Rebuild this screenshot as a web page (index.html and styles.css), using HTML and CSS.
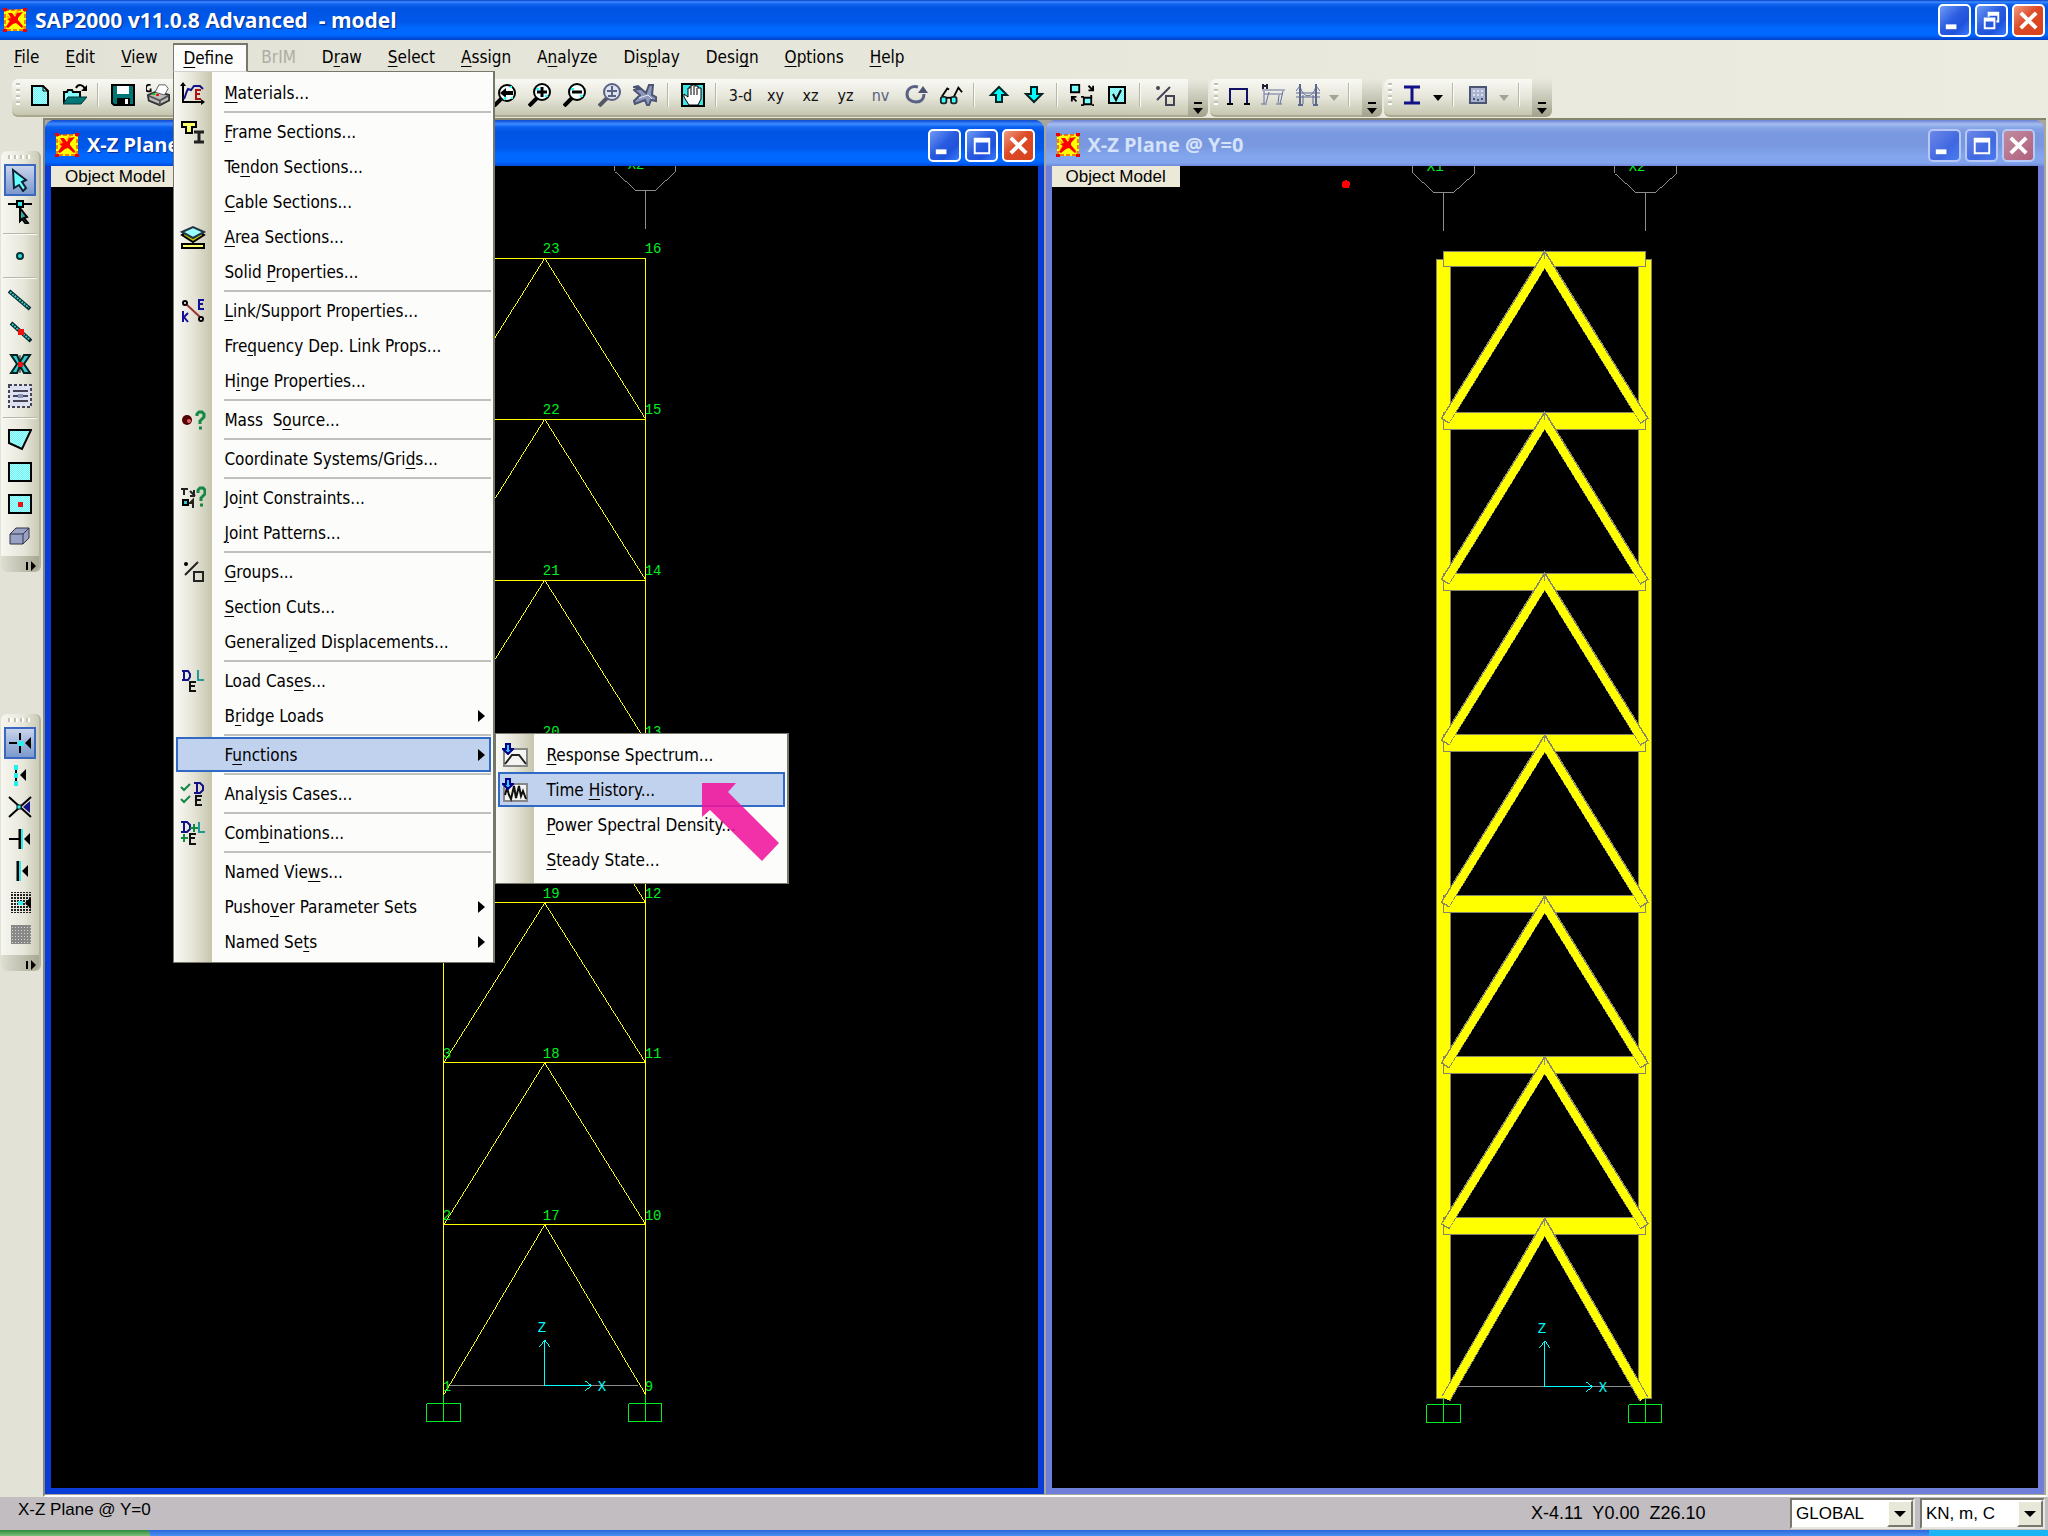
FILE: index.html
```html
<!DOCTYPE html>
<html lang="en">
<head>
  <meta charset="UTF-8">
  <title>SAP2000 v11.0.8 Advanced - model</title>
  <link rel="stylesheet" href="styles.css">
</head>
<body>
<svg class="defs" width="0" height="0" aria-hidden="true">
  <defs>
    <pattern id="dither" width="2" height="2" patternUnits="userSpaceOnUse">
      <rect width="2" height="2" fill="#5ff"/>
      <rect width="1" height="1" fill="#c4f4f4"/>
      <rect x="1" y="1" width="1" height="1" fill="#c4f4f4"/>
    </pattern>
    <pattern id="dots" width="3" height="3" patternUnits="userSpaceOnUse">
      <rect width="2" height="2" fill="#222"/>
    </pattern>
    <pattern id="mesh" width="3" height="3" patternUnits="userSpaceOnUse">
      <rect width="3" height="3" fill="#888"/>
      <rect x="1" y="1" width="1" height="1" fill="#d8d8d0"/>
    </pattern>
    <symbol id="logo" viewBox="0 0 24 24">
      <path d="M1 2l22-1v22H1z" fill="#ff0"/>
      <path d="M2 2h20v20H2z" fill="none" stroke="#e00" stroke-width="1" stroke-dasharray="4 2"/>
      <path d="M0 0h4v3H0zM20 0h4v3h-4zM0 21h4v3H0zM20 21h4v3h-4z" fill="#e00"/>
      <path d="M4 8l4 3-4 8M17 17l4 3M15 3l-3 4" fill="none" stroke="#fa0" stroke-width="2"/>
      <path d="M5 5h4l3 4 2-4 6-1-5 6v2l5 6-1 2-6-5-3 1-5 4-2-1 4-6-3-2 4-1z" fill="#f00"/>
    </symbol>
    <symbol id="min" viewBox="0 0 30 30"><path d="M6 19h11v5H6z" fill="#fff"/></symbol>
    <symbol id="max" viewBox="0 0 30 30"><path d="M7 7h17v17H7zM9 12v10h13V12z" fill="#fff" fill-rule="evenodd"/></symbol>
    <symbol id="restore" viewBox="0 0 30 30"><path d="M11 6h12v11h-3v-2h1v-5h-8v1h-2zM7 12h12v12H7zM9 16v6h8v-6z" fill="#fff" fill-rule="evenodd"/></symbol>
    <symbol id="close" viewBox="0 0 30 30"><path d="M7 7l16 16M23 7L7 23" stroke="#fff" stroke-width="4"/></symbol>
    <symbol id="down-blue" viewBox="0 0 12 12"><path d="M4 1h4v5h3l-5 5-5-5h3z" fill="#3cf" stroke="#008" stroke-width="2"/></symbol>
  </defs>
</svg>

<div class="app">
  <header class="titlebar">
    <svg class="logo"><use href="#logo"/></svg>
    <h1 class="title title-app">SAP2000 v11.0.8 Advanced&nbsp; - model</h1>
    <button class="caption" aria-label="Minimize"><svg><use href="#min"/></svg></button>
    <button class="caption" aria-label="Restore"><svg><use href="#restore"/></svg></button>
    <button class="caption caption-close" aria-label="Close"><svg><use href="#close"/></svg></button>
  </header>

  <nav class="menubar">
    <button class="menu-title"><u>F</u>ile</button>
    <button class="menu-title"><u>E</u>dit</button>
    <button class="menu-title"><u>V</u>iew</button>
    <div class="menu-open">
      <button class="menu-title active"><u>D</u>efine</button>
      <div class="menu">
        <button class="item">
          <svg class="item-icon" viewBox="0 0 26 24"><path d="M3 3v18h21" fill="none" stroke="#000" stroke-width="2"/><path d="M0 5l3-4 3 4zM21 18l4 3-4 3z"/><path d="M4 18c2-4 2-7 4-10l3 1 3-4h6l3 3" fill="none" stroke="#118" stroke-width="2"/><path d="M21 9h-5v9h5M16 13h4" fill="none" stroke="#a11" stroke-width="2"/></svg>
          <span><u>M</u>aterials...</span></button>
        <hr>
        <button class="item">
          <svg class="item-icon" viewBox="0 0 26 24"><path d="M2 2h14v5h-4v6H6V7H2z" fill="#ff6" stroke="#000" stroke-width="2"/><path d="M14 12h10M14 22h10M19 12v10" stroke="#222" stroke-width="3"/></svg>
          <span><u>F</u>rame Sections...</span></button>
        <button class="item"><span class="item-icon"></span><span>Te<u>n</u>don Sections...</span></button>
        <button class="item"><span class="item-icon"></span><span><u>C</u>able Sections...</span></button>
        <button class="item">
          <svg class="item-icon" viewBox="0 0 26 24"><path d="M2 10l11 7 11-7-4-3H6z" fill="#cc0" stroke="#000" stroke-width="2"/><path d="M2 7l11-5 11 5-11 6z" fill="#9ff" stroke="#234" stroke-width="2"/><path d="M2 19h22v4H2z" fill="#ff6" stroke="#000" stroke-width="2"/></svg>
          <span><u>A</u>rea Sections...</span></button>
        <button class="item"><span class="item-icon"></span><span>Solid <u>P</u>roperties...</span></button>
        <hr>
        <button class="item">
          <svg class="item-icon" viewBox="0 0 26 24"><path d="M6 5l14 13" stroke="#933" stroke-width="2"/><circle cx="5" cy="4" r="2" fill="#fff" stroke="#000" stroke-width="2"/><circle cx="21" cy="20" r="2" fill="#fff" stroke="#000" stroke-width="2"/><path d="M24 1h-5v9h5M19 5h4M3 12v11M8 14l-4 4 4 5" fill="none" stroke="#119" stroke-width="2"/></svg>
          <span><u>L</u>ink/Support Properties...</span></button>
        <button class="item"><span class="item-icon"></span><span>Fre<u>q</u>uency Dep. Link Props...</span></button>
        <button class="item"><span class="item-icon"></span><span>H<u>i</u>nge Properties...</span></button>
        <hr>
        <button class="item">
          <svg class="item-icon" viewBox="0 0 26 24"><circle cx="7" cy="12" r="5" fill="#500"/><circle cx="9" cy="13" r="2" fill="#d66"/><path d="M17 8V6l2-2h3l2 2v3l-4 4v3M19 20h3" fill="none" stroke="#184" stroke-width="3"/></svg>
          <span>Mass&nbsp; S<u>o</u>urce...</span></button>
        <hr>
        <button class="item"><span class="item-icon"></span><span>Coordinate Systems/Gri<u>d</u>s...</span></button>
        <hr>
        <button class="item">
          <svg class="item-icon" viewBox="0 0 26 24"><path d="M1 3h7M4 3v6M10 5l5 5M14 4v6M10 10h5M14 17h-4l3-3v8" fill="none" stroke="#222" stroke-width="2"/><rect x="3" y="14" width="5" height="5" fill="#3cc" stroke="#000" stroke-width="2"/><path d="M18 7V4l2-2h3l2 2v4l-4 4v3M20 19h3" fill="none" stroke="#184" stroke-width="3"/></svg>
          <span>Jo<u>i</u>nt Constraints...</span></button>
        <button class="item"><span class="item-icon"></span><span><u>J</u>oint Patterns...</span></button>
        <hr>
        <button class="item">
          <svg class="item-icon" viewBox="0 0 26 24"><circle cx="6" cy="4" r="2"/><path d="M18 2L5 15M14 12h9v9h-9z" fill="none" stroke="#222" stroke-width="2"/></svg>
          <span><u>G</u>roups...</span></button>
        <button class="item"><span class="item-icon"></span><span><u>S</u>ection Cuts...</span></button>
        <button class="item"><span class="item-icon"></span><span>Generali<u>z</u>ed Displacements...</span></button>
        <hr>
        <button class="item">
          <svg class="item-icon" viewBox="0 0 26 24"><path d="M2 2h6l2 3v3l-2 3H2M4 2v9" fill="none" stroke="#118" stroke-width="2"/><path d="M18 1v10h6" fill="none" stroke="#299" stroke-width="2"/><path d="M16 13h-6v9h6M10 17h5" fill="none" stroke="#111" stroke-width="2"/></svg>
          <span>Load Cas<u>e</u>s...</span></button>
        <button class="item has-sub"><span class="item-icon"></span><span>B<u>r</u>idge Loads</span></button>
        <hr>
        <button class="item has-sub selected"><span class="item-icon"></span><span>F<u>u</u>nctions</span></button>
        <hr>
        <button class="item">
          <svg class="item-icon" viewBox="0 0 26 24"><path d="M1 5l3 3 6-6M1 17l3 3 6-6" fill="none" stroke="#184" stroke-width="2"/><path d="M14 1h6l3 3v4l-3 3h-6M17 1v10" fill="none" stroke="#118" stroke-width="2"/><path d="M22 14h-6v9h6M16 18h5" fill="none" stroke="#111" stroke-width="2"/></svg>
          <span>Anal<u>y</u>sis Cases...</span></button>
        <hr>
        <button class="item">
          <svg class="item-icon" viewBox="0 0 26 24"><path d="M1 1h6l3 3v4l-3 3H1M4 1v10" fill="none" stroke="#118" stroke-width="2"/><path d="M10 7h8M14 3v8M1 17h7M4 13v8" stroke="#184" stroke-width="2"/><path d="M19 1v10h6" fill="none" stroke="#299" stroke-width="2"/><path d="M16 13h-6v10h6M10 17h5" fill="none" stroke="#111" stroke-width="2"/></svg>
          <span>Com<u>b</u>inations...</span></button>
        <hr>
        <button class="item"><span class="item-icon"></span><span>Named Vie<u>w</u>s...</span></button>
        <button class="item has-sub"><span class="item-icon"></span><span>Pusho<u>v</u>er Parameter Sets</span></button>
        <button class="item has-sub"><span class="item-icon"></span><span>Named Se<u>t</u>s</span></button>

        <div class="menu submenu">
          <button class="item">
            <svg class="item-icon" viewBox="0 0 26 24"><rect x="2" y="6" width="23" height="17" fill="#f4f4f0" stroke="#888" stroke-width="2"/><path d="M3 21l7-9h7l7 9" fill="none" stroke="#222" stroke-width="2"/><use href="#down-blue" width="12" height="12"/></svg>
            <span><u>R</u>esponse Spectrum...</span></button>
          <button class="item selected">
            <svg class="item-icon" viewBox="0 0 26 24"><rect x="2" y="6" width="23" height="17" fill="#f4f4f0" stroke="#888" stroke-width="2"/><path d="M3 17l2-7 2 7 2 4 3-13 2 12 3-12 2 10 2-5 3 8" fill="none" stroke="#111" stroke-width="2"/><use href="#down-blue" width="12" height="12"/></svg>
            <span>Time <u>H</u>istory...</span></button>
          <button class="item"><span class="item-icon"></span><span><u>P</u>ower Spectral Density...</span></button>
          <button class="item"><span class="item-icon"></span><span><u>S</u>teady State...</span></button>
          <svg class="pointer" viewBox="0 0 78 78"><path d="M0 0h34l-8 9 51 51-17 18L8 27l-8 7z" fill="#f0149c" fill-opacity=".88"/></svg>
        </div>
      </div>
    </div>
    <button class="menu-title" disabled>BrIM</button>
    <button class="menu-title">D<u>r</u>aw</button>
    <button class="menu-title"><u>S</u>elect</button>
    <button class="menu-title"><u>A</u>ssign</button>
    <button class="menu-title">A<u>n</u>alyze</button>
    <button class="menu-title">Dis<u>p</u>lay</button>
    <button class="menu-title">Desi<u>g</u>n</button>
    <button class="menu-title"><u>O</u>ptions</button>
    <button class="menu-title"><u>H</u>elp</button>
  </nav>

  <div class="toolbars">
    <div class="toolbar">
      <span class="grip"></span>
      <button class="tool" aria-label="New"><svg viewBox="0 0 24 24"><path d="M4 3h11l5 5v14H4z" fill="url(#dither)" stroke="#000" stroke-width="2"/><path d="M15 3v5h5" fill="none" stroke="#000"/></svg></button>
      <button class="tool" aria-label="Open"><svg viewBox="0 0 24 24"><path d="M1 20V9h3l1-2h4l1 2h7v5" fill="#8ff" stroke="#000" stroke-width="2"/><path d="M0 21l5-7h19l-6 7z" fill="#077" stroke="#033" stroke-width="1"/><path d="M13 5c2-4 7-4 9 1" fill="none" stroke="#000" stroke-width="2"/><path d="M24 2v6h-6z"/></svg></button>
      <span class="tool-sep"></span>
      <button class="tool" aria-label="Save"><svg viewBox="0 0 24 24"><path d="M1 2h22v20H3l-2-2z" fill="#077" stroke="#000" stroke-width="2"/><path d="M6 3h12v8H6z" fill="#fff"/><path d="M6 15h13v7H6z"/><path d="M14 16h3v5h-3z" fill="#fff"/></svg></button>
      <button class="tool" aria-label="Print graphics"><svg viewBox="0 0 26 24"><path d="M2 12l10-4 13 4v6l-10 5-12-5z" fill="#bbb" stroke="#333" stroke-width="2"/><path d="M10 9l4-8h7l3 4-4 7z" fill="#fff" stroke="#555"/><path d="M3 13l12 5 9-5M15 18v5" fill="none" stroke="#555" stroke-width="2"/><path d="M5 1H2L0 3v4l2 1h3V5" fill="none" stroke="#000" stroke-width="2"/><path d="M7 10h3v2H7z" fill="#0c0"/><path d="M11 11h3v2h-3z" fill="#e00"/></svg></button>
      <span class="tool-covered"></span>
      <button class="tool" aria-label="Previous zoom"><svg viewBox="0 0 24 24"><path d="M1 23l8-8" stroke="#000" stroke-width="4"/><circle cx="14" cy="10" r="8" fill="#f4fffc" stroke="#000" stroke-width="2"/><path d="M7 10l6-5v3h7v4h-7v3z"/><path d="M11 17l2-3M18 15h2M17 4h2" stroke="#2ff" stroke-width="2"/></svg></button>
      <button class="tool" aria-label="Zoom in"><svg viewBox="0 0 24 24"><path d="M1 23l8-8" stroke="#000" stroke-width="4"/><circle cx="14" cy="9" r="8" fill="#f4fffc" stroke="#000" stroke-width="2"/><path d="M9 9h10M14 4v10" stroke="#000" stroke-width="3"/><path d="M8 6h3M17 13h3" stroke="#2ff" stroke-width="2"/></svg></button>
      <button class="tool" aria-label="Zoom out"><svg viewBox="0 0 24 24"><path d="M1 23l8-8" stroke="#000" stroke-width="4"/><circle cx="14" cy="9" r="8" fill="#f4fffc" stroke="#000" stroke-width="2"/><path d="M9 9h10" stroke="#000" stroke-width="3"/><path d="M8 6h3M17 13h3" stroke="#2ff" stroke-width="2"/></svg></button>
      <button class="tool off" aria-label="Zoom to fit"><svg viewBox="0 0 24 24"><path d="M1 23l8-8" stroke="#556" stroke-width="4"/><circle cx="14" cy="9" r="8" fill="#dde2ee" stroke="#5a6284" stroke-width="2"/><path d="M9 8h10M14 3v9M10 13h8" stroke="#5a6284" stroke-width="2"/></svg></button>
      <button class="tool off" aria-label="Fly"><svg viewBox="0 0 24 24"><path d="M1 4l4-1 8 7 3-8h4l-1 10 4 2v4l-5-1-2 5h-2l-2-5-10 4-1-3 6-6-6-5 5-1z" fill="#8e98bc" stroke="#4c5474" stroke-width="2"/><path d="M6 15l9-3 4 4" fill="none" stroke="#e4e8f4"/></svg></button>
      <span class="tool-sep"></span>
      <button class="tool" aria-label="Pan"><svg viewBox="0 0 24 24"><path d="M1 1h22v22H1z" fill="#3fe6e6" stroke="#000" stroke-width="2"/><path d="M8 22l-5-8v-3l4 3V5h2V3h2V2h3v1h3v2h3v11l-3 6z" fill="#fff" stroke="#000"/><path d="M10 4v8M13 3v9M16 5v7" stroke="#000" stroke-width="1"/></svg></button>
      <span class="tool-sep"></span>
      <button class="tool">3-d</button>
      <button class="tool">xy</button>
      <button class="tool">xz</button>
      <button class="tool">yz</button>
      <button class="tool off">nv</button>
      <button class="tool off" aria-label="Rotate"><svg viewBox="0 0 24 24"><path d="M14 4C8 2 3 6 3 11s4 8 9 8 8-3 8-8" fill="none" stroke="#5a6284" stroke-width="3"/><path d="M14 10h10l-5-7z" fill="#4c5474"/></svg></button>
      <button class="tool" aria-label="Perspective"><svg viewBox="0 0 26 24"><path d="M3 14l6-9 2 1M16 14l5-10 4 5" fill="none" stroke="#000" stroke-width="2"/><rect x="2" y="14" width="6" height="7" rx="2" fill="#3ff" stroke="#222" stroke-width="2"/><rect x="13" y="14" width="6" height="7" rx="2" fill="#3ff" stroke="#222" stroke-width="2"/><path d="M8 15h5" stroke="#000" stroke-width="2"/></svg></button>
      <span class="tool-sep"></span>
      <button class="tool" aria-label="Move up in list"><svg viewBox="0 0 24 24"><path d="M12 4l8 8h-5v7H9v-7H4z" fill="#0ff" stroke="#022" stroke-width="2"/></svg></button>
      <button class="tool" aria-label="Move down in list"><svg viewBox="0 0 24 24"><path d="M12 19l8-8h-5V4H9v7H4z" fill="#0ff" stroke="#022" stroke-width="2"/></svg></button>
      <span class="tool-sep"></span>
      <button class="tool" aria-label="Object shrink"><svg viewBox="0 0 26 24"><path d="M1 1h9v8H1zM15 15h8v7h-8z" fill="#7ff" stroke="#000" stroke-width="2"/><path d="M20 2l5 5M25 2v5h-5M7 19l-5-5M2 19v-5h5" fill="none" stroke="#000" stroke-width="2"/><path d="M12 14h3M12 23h3M23 12v3M24 23h2" stroke="#000" stroke-width="2"/></svg></button>
      <button class="tool" aria-label="Set display options"><svg viewBox="0 0 24 24"><path d="M4 4h16v16H4z" fill="url(#dither)" stroke="#000" stroke-width="2"/><path d="M8 11l3 6 5-10" fill="none" stroke="#000" stroke-width="2"/></svg></button>
      <span class="tool-sep"></span>
      <button class="tool off" aria-label="Assign to group"><svg viewBox="0 0 24 24"><circle cx="5" cy="5" r="2" fill="#445"/><path d="M17 4L4 17M13 13h8v9h-8z" fill="none" stroke="#445" stroke-width="2"/></svg></button>
    </div>
    <button class="overflow" aria-label="More"><svg viewBox="0 0 12 14"><path d="M2 1h8v2H2zM1 7h10l-5 6z"/></svg></button>
    <div class="toolbar">
      <span class="grip"></span>
      <button class="tool" aria-label="Draw frame"><svg viewBox="0 0 24 24"><path d="M4 20V6h17v14" fill="none" stroke="#116" stroke-width="2"/><path d="M1 21h6M18 21h6" stroke="#000" stroke-width="2"/></svg></button>
      <button class="tool off" aria-label="Steel frame"><svg viewBox="0 0 24 24"><path d="M2 1v5M6 1v5M2 3h4" fill="none" stroke="#223" stroke-width="2"/><path d="M1 7h23M3 11h19M3 8v13M8 9L5 20M22 8l-3 13M18 12l-1 8M0 21h6M15 21h6" fill="none" stroke="#6670a0" stroke-width="1"/></svg></button>
      <button class="tool off" aria-label="Truss"><svg viewBox="0 0 24 24"><path d="M4 1v22M20 1v22M2 22h5M17 22h5" fill="none" stroke="#5a6690" stroke-width="2"/><path d="M0 10h24M0 14h24M4 3c3 13 13 13 16 0M0 8l4-5M24 8l-4-5M7 12v9M17 12v9" fill="none" stroke="#5a6690"/></svg></button>
      <button class="drop off" aria-label="More trusses"><svg viewBox="0 0 10 6"><path d="M0 0h10L5 6z"/></svg></button>
      <span class="tool-sep"></span>
    </div>
    <button class="overflow" aria-label="More"><svg viewBox="0 0 12 14"><path d="M2 1h8v2H2zM1 7h10l-5 6z"/></svg></button>
    <div class="toolbar">
      <span class="grip"></span>
      <button class="tool" aria-label="Steel design"><svg viewBox="0 0 24 24"><path d="M4 4h16M4 20h16M12 4v16" stroke="#118" stroke-width="3"/></svg></button>
      <button class="drop" aria-label="More steel"><svg viewBox="0 0 10 6"><path d="M0 0h10L5 6z"/></svg></button>
      <span class="tool-sep"></span>
      <button class="tool off" aria-label="Concrete design"><svg viewBox="0 0 24 24"><path d="M4 4h16v16H4z" fill="#a8b4d0" stroke="#4a5474" stroke-width="2"/><path d="M7 8h10M7 12h10" stroke="#dde" stroke-width="2" stroke-dasharray="2 2"/><path d="M7 16h2M11 17h2M15 16h2" stroke="#4a5474" stroke-width="2"/></svg></button>
      <button class="drop off" aria-label="More concrete"><svg viewBox="0 0 10 6"><path d="M0 0h10L5 6z"/></svg></button>
      <span class="tool-sep"></span>
    </div>
    <button class="overflow" aria-label="More"><svg viewBox="0 0 12 14"><path d="M2 1h8v2H2zM1 7h10l-5 6z"/></svg></button>
  </div>

  <div class="main">
    <aside class="sidebar">
      <div class="sidebox">
        <span class="side-grip"></span>
        <button class="side-tool on" aria-label="Select"><svg viewBox="0 0 24 24"><path d="M5 2l13 10-4 2 4 6-3 3-4-6-5 3z" fill="#6ff" stroke="#123" stroke-width="2"/></svg></button>
        <button class="side-tool" aria-label="Reshape"><svg viewBox="0 0 24 24"><path d="M0 4h24" stroke="#000" stroke-width="2"/><path d="M9 1h6v6H9z" fill="#3ee" stroke="#000" stroke-width="2"/><path d="M12 8l7 9-3 1 4 5-2 1-4-5-2 2z" fill="#3aa" stroke="#000" stroke-width="2"/></svg></button>
        <span class="side-sep"></span>
        <button class="side-tool" aria-label="Special joint"><svg viewBox="0 0 24 24"><circle cx="12" cy="12" r="3" fill="#3dd" stroke="#033" stroke-width="2"/></svg></button>
        <span class="side-sep"></span>
        <button class="side-tool" aria-label="Frame"><svg viewBox="0 0 24 24"><path d="M1 3l21 18" stroke="#022" stroke-width="4"/><path d="M2 4l19 16" stroke="#3cc" stroke-width="2" stroke-dasharray="2 1"/></svg></button>
        <button class="side-tool" aria-label="Quick frame"><svg viewBox="0 0 24 24"><path d="M3 3l20 18" stroke="#022" stroke-width="4"/><path d="M4 4l18 16" stroke="#3cc" stroke-width="2" stroke-dasharray="2 1"/><path d="M10 9h6v6h-6z" fill="#e11"/></svg></button>
        <button class="side-tool" aria-label="Quick braces"><svg viewBox="0 0 24 24"><path d="M3 3h6l3 7 4-7h6l-6 9 6 9h-6l-4-7-3 7H3l6-9z" fill="#3cc" stroke="#022" stroke-width="2"/><path d="M12 3v18" stroke="#022" stroke-width="1"/><path d="M10 10h5v5h-5z" fill="#e11"/></svg></button>
        <button class="side-tool" aria-label="Secondary beams"><svg viewBox="0 0 24 24"><path d="M1 1h22v22H1z" fill="#dde2f2" stroke="#445" stroke-width="2" stroke-dasharray="3 2"/><path d="M5 7h15M5 12h15M5 17h15" stroke="#445" stroke-width="2"/><path d="M10 10h5v4h-5z" fill="#8892b8"/></svg></button>
        <span class="side-sep"></span>
        <button class="side-tool" aria-label="Poly area"><svg viewBox="0 0 24 24"><path d="M1 2h22L14 21 1 15z" fill="url(#dither)" stroke="#000" stroke-width="2"/></svg></button>
        <button class="side-tool" aria-label="Rectangular area"><svg viewBox="0 0 24 24"><path d="M1 3h22v18H1z" fill="url(#dither)" stroke="#000" stroke-width="2"/></svg></button>
        <button class="side-tool" aria-label="Quick area"><svg viewBox="0 0 24 24"><path d="M1 3h22v18H1z" fill="url(#dither)" stroke="#000" stroke-width="2"/><path d="M10 10h5v5h-5z" fill="#e11"/></svg></button>
        <button class="side-tool" aria-label="Solid"><svg viewBox="0 0 24 24"><path d="M2 10l6-6h13v10l-6 6H2zM2 10h13v10M15 10l6-6" fill="#98a2c4" stroke="#334" stroke-width="1"/></svg></button>
        <button class="side-more" aria-label="More"><svg viewBox="0 0 12 10"><path d="M1 1h2v8H1zM6 0l5 5-5 5z"/></svg></button>
      </div>
      <div class="sidebox">
        <span class="side-grip"></span>
        <button class="side-tool on" aria-label="Snap to points"><svg viewBox="0 0 24 24"><path d="M1 12h8M12 2v7M12 15v7" stroke="#000" stroke-width="2"/><path d="M10 10h6v5h-6z" fill="#3ee"/><path d="M23 6v12l-6-6z"/></svg></button>
        <button class="side-tool" aria-label="Snap to ends"><svg viewBox="0 0 24 24"><path d="M8 3v18" stroke="#000" stroke-width="2"/><path d="M6 2h4v5H6zM6 10h4v5H6zM6 18h4v5H6z" fill="#2ee"/><path d="M18 6v12l-6-6z"/></svg></button>
        <button class="side-tool" aria-label="Snap to intersections"><svg viewBox="0 0 24 24"><path d="M1 2l22 20M23 2L1 22" stroke="#000" stroke-width="2"/><path d="M9 10h4v4H9z" fill="#3ee" stroke="#022"/><path d="M22 6v12l-7-6z" fill="#118"/></svg></button>
        <button class="side-tool" aria-label="Snap perpendicular"><svg viewBox="0 0 24 24"><path d="M1 12h11" stroke="#000" stroke-width="2"/><path d="M12 2v20" stroke="#000" stroke-width="3"/><path d="M14 2v20" stroke="#2ee" stroke-width="2"/><path d="M22 6v12l-6-6z"/></svg></button>
        <button class="side-tool" aria-label="Snap to lines"><svg viewBox="0 0 24 24"><path d="M10 2v20" stroke="#000" stroke-width="3"/><path d="M12 2v20" stroke="#2ee" stroke-width="2"/><path d="M20 6v12l-6-6z"/></svg></button>
        <button class="side-tool" aria-label="Snap to fine grid"><svg viewBox="0 0 24 24"><path d="M3 1h20v21H3z" fill="url(#dots)"/><path d="M10 10h5v4h-5z" fill="#3ee"/><path d="M23 6v12l-6-6z"/></svg></button>
        <button class="side-tool" aria-label="Fine grid"><svg viewBox="0 0 24 24"><path d="M3 2h20v19H3z" fill="url(#mesh)"/></svg></button>
        <button class="side-more" aria-label="More"><svg viewBox="0 0 12 10"><path d="M1 1h2v8H1zM6 0l5 5-5 5z"/></svg></button>
      </div>
    </aside>

    <main class="mdi">
      <section class="window">
        <header class="window-bar">
          <svg class="logo"><use href="#logo"/></svg>
          <h2 class="title">X-Z Plane @ Y=0</h2>
          <button class="caption" aria-label="Minimize"><svg><use href="#min"/></svg></button>
          <button class="caption" aria-label="Maximize"><svg><use href="#max"/></svg></button>
          <button class="caption caption-close" aria-label="Close"><svg><use href="#close"/></svg></button>
        </header>
        <div class="view">
          <span class="view-label">Object Model</span>
          <svg class="drawing" viewBox="51 166 987 1322">
            <g class="grid-line">
              <path d="M615 160v11l21 19h20l20-19v-11M646 190v39M448 1386h190"/>
            </g>
            <g class="wire">
              <path d="M444 1395V258h202v1137M444 419h202M444 580h202M444 741h202M444 903h202M444 1063h202M444 1225h202"/>
              <path d="M444 419l101-161 101 161M444 580l101-161 101 161M444 741l101-161 101 161M444 903l101-162 101 162M444 1063l101-160 101 160M444 1225l101-162 101 162M444 1395l101-170 101 170"/>
            </g>
            <g class="support">
              <path d="M427 1404h34v18h-34zM444 1395v27M629 1404h33v18h-33zM646 1395v27"/>
            </g>
            <g class="axis">
              <path d="M545 1340v46h47M540 1347l5-7 5 7M585 1381l7 5-7 5"/>
              <text x="538" y="1332">Z</text>
              <text x="598" y="1391">X</text>
            </g>
            <g class="joint">
              <text x="628" y="169">X2</text>
              <text x="543" y="253">23</text><text x="645" y="253">16</text>
              <text x="543" y="414">22</text><text x="645" y="414">15</text>
              <text x="543" y="575">21</text><text x="645" y="575">14</text>
              <text x="543" y="736">20</text><text x="645" y="736">13</text>
              <text x="543" y="898">19</text><text x="645" y="898">12</text>
              <text x="443" y="1058">3</text><text x="543" y="1058">18</text><text x="645" y="1058">11</text>
              <text x="443" y="1220">2</text><text x="543" y="1220">17</text><text x="645" y="1220">10</text>
              <text x="443" y="1391">1</text><text x="645" y="1391">9</text>
            </g>
          </svg>
        </div>
      </section>

      <section class="window inactive">
        <header class="window-bar">
          <svg class="logo"><use href="#logo"/></svg>
          <h2 class="title">X-Z Plane @ Y=0</h2>
          <button class="caption" aria-label="Minimize"><svg><use href="#min"/></svg></button>
          <button class="caption" aria-label="Maximize"><svg><use href="#max"/></svg></button>
          <button class="caption caption-close" aria-label="Close"><svg><use href="#close"/></svg></button>
        </header>
        <div class="view">
          <span class="view-label">Object Model</span>
          <svg class="drawing" viewBox="1052 166 987 1322">
            <defs>
              <g id="brace">
                <path class="edge" d="M1445 421l100-162 100 162"/>
                <path class="fill" d="M1446 420l99-160 99 160"/>
              </g>
              <rect id="beam" class="solid" x="1444" y="412" width="202" height="17"/>
            </defs>
            <g class="grid-line">
              <path d="M1413 160v13l21 19h20l21-19v-13M1444 192v39M1615 160v13l21 19h20l21-19v-13M1646 192v39M1450 1387h190"/>
            </g>
            <rect class="solid" x="1437" y="259" width="14" height="1140"/>
            <rect class="solid" x="1639" y="259" width="13" height="1140"/>
            <rect class="solid" x="1444" y="251" width="202" height="15"/>
            <use href="#beam"/>
            <use href="#beam" y="161"/>
            <use href="#beam" y="322"/>
            <use href="#beam" y="484"/>
            <use href="#beam" y="645"/>
            <use href="#beam" y="806"/>
            <use href="#brace"/>
            <use href="#brace" y="161"/>
            <use href="#brace" y="322"/>
            <use href="#brace" y="484"/>
            <use href="#brace" y="645"/>
            <use href="#brace" y="806"/>
            <path class="edge" d="M1446 1399l99-172 99 172"/>
            <path class="fill" d="M1446 1399l99-171 99 171"/>
            <g class="grid-line">
              <path d="M1545 251v8M1545 412v8M1545 573v8M1545 734v8M1545 896v8M1545 1057v8M1545 1218v8"/>
            </g>
            <g class="support">
              <path d="M1427 1405h34v18h-34zM1444 1398v25M1629 1405h33v18h-33zM1646 1398v25"/>
            </g>
            <g class="axis">
              <path d="M1545 1341v46h48M1540 1348l5-7 5 7M1586 1382l7 5-7 5"/>
              <text x="1538" y="1333">Z</text>
              <text x="1599" y="1392">X</text>
            </g>
            <g class="joint">
              <text x="1427" y="171">X1</text>
              <text x="1629" y="171">X2</text>
            </g>
            <circle cx="1346" cy="184" r="4" fill="#f00"/>
          </svg>
        </div>
      </section>
    </main>
  </div>

  <footer class="statusbar">
    <span class="status-text">X-Z Plane @ Y=0</span>
    <output class="coords">X-4.11&nbsp; Y0.00&nbsp; Z26.10</output>
    <label class="combo">
      <select aria-label="Coordinate system"><option>GLOBAL</option></select>
      <span class="combo-arrow"></span>
    </label>
    <label class="combo">
      <select aria-label="Units"><option>KN, m, C</option></select>
      <span class="combo-arrow"></span>
    </label>
  </footer>
  <div class="taskbar"><span class="start"></span><span class="tray"></span></div>
</div>
</body>
</html>
```

FILE: styles.css
```css
* {
  margin: 0;
  padding: 0;
  box-sizing: border-box;
}

body {
  font-family: "DejaVu Sans Condensed", "DejaVu Sans", sans-serif;
  font-size: 17px;
  color: #000;
  overflow: hidden;
}

button {
  font: inherit;
  color: inherit;
  border: none;
  background: none;
}

u {
  text-underline-offset: 3px;
  text-decoration-thickness: 1px;
}

.defs {
  position: absolute;
}

.app {
  height: 100vh;
  display: flex;
  flex-direction: column;
  background: linear-gradient(to right, #e3e2d6, #ecece0);
}

/* title bars */

.titlebar {
  height: 40px;
  padding: 0 3px 0 3px;
  display: flex;
  align-items: center;
  gap: 4px;
  background: linear-gradient(#0a3fc8 0, #3c8cff 2px, #1064f0 4px, #0054e3 8px, #0058ea 22px, #0068ff 28px, #0068ff 35px, #0040c8 40px);
}

.logo {
  width: 24px;
  height: 24px;
  flex: none;
}

.title {
  flex: 1;
  margin-left: 4px;
  font-family: "Open Sans", "Noto Sans", sans-serif;
  font-size: 20px;
  line-height: 24px;
  font-weight: 700;
  color: #fff;
  text-shadow: 1px 1px 1px #0a2a88;
  white-space: nowrap;
}

.title-app {
  font-size: 21px;
}

.caption {
  width: 33px;
  height: 33px;
  border: 2px solid #fff;
  border-radius: 5px;
  background: linear-gradient(135deg, #6f9cf6, #2a5ce0 45%, #1f52dc 70%, #3a7cff);
}

.caption svg {
  display: block;
  width: 29px;
  height: 29px;
}

.caption-close {
  background: linear-gradient(135deg, #f09a80, #dc4a26 45%, #d8421c);
}

/* menu bar */

.menubar {
  height: 38px;
  padding-left: 1px;
  display: flex;
  align-items: flex-end;
}

.menu-title {
  height: 29px;
  padding: 0 13px;
  margin-bottom: 6px;
  line-height: 27px;
}

.menu-title:disabled {
  color: #aeada2;
}

.menu-open {
  position: relative;
  z-index: 10;
  margin-left: 3px;
}

.menu-title.active {
  display: block;
  position: relative;
  z-index: 2;
  padding: 0 13px 0 9px;
  border: 1px solid #77776c;
  border-width: 2px 2px 0 1px;
  border-bottom: 1px solid #d0d0cc;
  background: #fcfcfa;
}

.menu {
  position: absolute;
  left: 0;
  top: 28px;
  width: 322px;
  padding: 3px 2px;
  border: 1px solid #77776c;
  border-right-width: 2px;
  background: linear-gradient(to right, #fafaf6, #e4e3d6 20px, #c6c6ae 38px, #fcfcfa 38px);
}

.menu hr {
  height: 4px;
  margin-left: 48px;
  border: solid transparent;
  border-width: 1px 0;
  background: #c0c0bc;
  background-clip: padding-box;
}

.item {
  display: flex;
  align-items: center;
  width: 100%;
  height: 35px;
  border: 2px solid transparent;
  text-align: left;
  white-space: nowrap;
}

.item.selected {
  border-color: #316ac5;
  background: #c1d2ee;
}

.item-icon {
  width: 26px;
  height: 24px;
  margin: 0 18px 0 2px;
  flex: none;
}

.has-sub::after {
  content: "";
  margin: 0 4px 0 auto;
  border: 6px solid transparent;
  border-left: 7px solid #000;
  border-right: none;
}

.submenu {
  left: 321px;
  top: 661px;
  width: 294px;
  padding: 3px 2px 6px;
}

.pointer {
  position: absolute;
  left: 206px;
  top: 49px;
  width: 78px;
  height: 78px;
}

/* top toolbars */

.toolbars {
  height: 40px;
  padding: 1px 0 1px 12px;
  display: flex;
}

.toolbar {
  display: flex;
  align-items: center;
  padding: 0 6px 4px 0;
  border-bottom: 2px solid #a9a98e;
  border-radius: 6px 0 0 6px;
  background: linear-gradient(#f9f9f5, #e6e6da 50%, #c6c6b0);
}

.grip {
  width: 4px;
  height: 24px;
  margin: 0 2px 0 4px;
  background: repeating-linear-gradient(#c4c3b4 0 2px, #fff 2px 4px, transparent 4px 6px);
}

.tool {
  width: 35px;
  height: 30px;
  color: #111;
  font-size: 16px;
}

.tool svg {
  display: block;
  width: 24px;
  height: 24px;
  margin: 0 auto;
}

.tool.off {
  color: #5a6080;
}

.tool-sep {
  width: 2px;
  height: 24px;
  margin: 0 6px 0 5px;
  border-left: 1px solid #b8b8a8;
  border-right: 1px solid #fafaf6;
}

.tool-covered {
  width: 312px;
}

.drop {
  width: 18px;
  height: 30px;
}

.drop svg {
  width: 10px;
  height: 6px;
}

.drop.off {
  fill: #a4a496;
}

.overflow {
  width: 20px;
  padding: 20px 2px 0 4px;
  margin-right: 2px;
  border-radius: 0 0 6px 0;
  background: linear-gradient(#e8e8de, #c8c8b8 50%, #a0a08a);
}

.overflow svg {
  display: block;
  width: 12px;
  height: 14px;
}

/* left toolbars */

.main {
  flex: 1;
  min-height: 0;
  display: flex;
}

.sidebar {
  width: 43px;
  padding: 33px 2px 0 1px;
  display: flex;
  flex-direction: column;
  gap: 142px;
}

.sidebox {
  display: flex;
  flex-direction: column;
  align-items: center;
  border-right: 2px solid #b4b49c;
  border-radius: 6px;
  background: linear-gradient(to right, #f7f7f2, #e6e6da 60%, #cacab6);
}

.side-grip {
  width: 24px;
  height: 4px;
  margin: 4px 0 5px;
  background: repeating-linear-gradient(to right, #c4c3b4 0 2px, #fff 2px 4px, transparent 4px 6px);
}

.side-tool {
  width: 32px;
  height: 32px;
  border: 2px solid transparent;
}

.side-tool svg {
  display: block;
  width: 24px;
  height: 24px;
  margin: 0 auto;
}

.side-tool.on {
  border-color: #3a68c0;
  background: linear-gradient(#c8d4ec, #7c98cc);
}

.side-sep {
  width: 34px;
  height: 2px;
  margin: 5px 0;
  border-top: 1px solid #b8b8a8;
  border-bottom: 1px solid #fafaf6;
}

.side-more {
  align-self: stretch;
  height: 16px;
  margin-top: 4px;
  padding: 3px 0 0 24px;
  border-radius: 0 0 6px 6px;
  background: linear-gradient(to right, #deded2, #a8a894);
}

.side-more svg {
  display: block;
  width: 12px;
  height: 10px;
}

/* document windows */

.mdi {
  flex: 1;
  min-width: 0;
  margin-right: 2px;
  padding: 0 2px 1px 0;
  display: flex;
  gap: 2px;
  border-top: 2px solid #86866f;
  border-left: 2px solid #86867c;
  border-bottom: 2px solid #fff;
  background: #a8a69c;
}

.window {
  flex: 1;
  min-width: 0;
  display: flex;
  flex-direction: column;
  border: 6px solid #0a3cd8;
  border-top: none;
  border-radius: 10px 10px 0 0;
  background: #0a3cd8;
}

.window-bar {
  height: 46px;
  margin: 0 -6px;
  padding: 4px 9px 0 10px;
  display: flex;
  align-items: center;
  gap: 4px;
  border-radius: 9px 9px 0 0;
  background: linear-gradient(#0a46d0 0, #3c8cff 4px, #0c60f0 7px, #0054e3 12px, #0058ea 28px, #0068ff 34px, #0068ff 42px, #0048d8 46px);
}

.window.inactive {
  border-color: #6f7ed8;
  background: #6f7ed8;
}

.inactive .window-bar {
  background: linear-gradient(#6a80d4 0, #a4bcf0 4px, #86a4e6 8px, #7898e0 14px, #7a98e0 26px, #82a6ee 36px, #82a4ec 43px, #7088d8 46px);
}

.inactive .title {
  color: #d4e2fa;
  text-shadow: none;
}

.inactive .caption {
  border-color: #b8c8f4;
  background: linear-gradient(135deg, #6c88e8, #4068e0 60%, #4a7cf0);
}

.inactive .caption-close {
  background: linear-gradient(135deg, #c08ca0, #b0607c);
}

.view {
  position: relative;
  flex: 1;
  min-height: 0;
  background: #000;
}

.view-label {
  position: absolute;
  left: 0;
  top: 0;
  padding: 0 14px;
  background: #ece9d8;
  font-family: "Liberation Sans", Arial, sans-serif;
  font-size: 17px;
  line-height: 21px;
}

.drawing {
  display: block;
  width: 100%;
  height: 100%;
  fill: none;
  shape-rendering: crispEdges;
}

.grid-line {
  stroke: #8c8c8c;
}

.wire {
  stroke: #ff0;
}

.support {
  stroke: #0e2;
}

.axis {
  stroke: #0ff;
}

.axis text,
.joint text {
  font-family: "Liberation Mono", "Courier New", monospace;
  font-size: 14px;
  stroke: none;
}

.axis text {
  fill: #0ff;
}

.joint text {
  fill: #0e2;
}

.solid {
  fill: #ff0;
  stroke: #85856a;
}

.edge {
  stroke: #85856a;
  stroke-width: 10px;
}

.fill {
  stroke: #ff0;
  stroke-width: 8px;
}

/* bottom */

.statusbar {
  height: 33px;
  padding: 1px 3px 2px 18px;
  display: flex;
  align-items: center;
  gap: 5px;
  background: #c1bdc0;
  font-family: "Liberation Sans", Arial, sans-serif;
  font-size: 17px;
}

.status-text {
  flex: 1;
  padding-bottom: 6px;
}

.coords {
  width: 254px;
  font-size: 18px;
}

.combo {
  position: relative;
  width: 125px;
  height: 31px;
  border: 2px solid;
  border-color: #77776c #e8e8e0 #e8e8e0 #77776c;
  background: #fff;
}

.combo select {
  width: 100%;
  height: 100%;
  padding-left: 4px;
  border: none;
  appearance: none;
  background: none;
  font: inherit;
  color: #000;
}

.combo-arrow {
  position: absolute;
  right: 0;
  top: 0;
  width: 26px;
  height: 27px;
  border: 2px solid;
  border-color: #fff #77776c #77776c #fff;
  background: #e8e8d8;
  pointer-events: none;
}

.combo-arrow::after {
  content: "";
  position: absolute;
  left: 5px;
  top: 9px;
  border: 6px solid transparent;
  border-top-color: #000;
  border-bottom: none;
}

.taskbar {
  height: 6px;
  display: flex;
  justify-content: space-between;
  background: linear-gradient(#2c68d8, #4a90f4);
}

.start {
  width: 150px;
  border-radius: 0 4px 0 0;
  background: linear-gradient(#2f8a3a, #7cc07c);
}

.tray {
  width: 119px;
  background: #18b4f4;
}
```
